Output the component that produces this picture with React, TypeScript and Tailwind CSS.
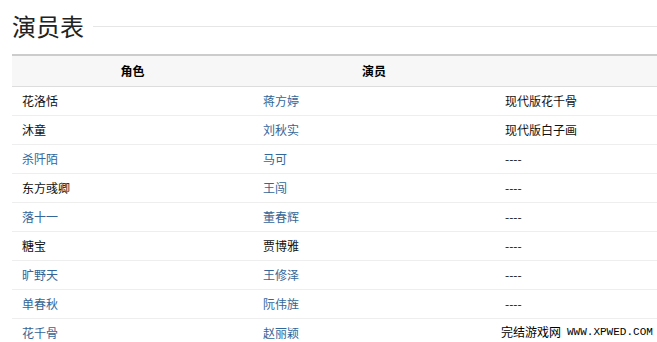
import React from "react";

type Row = { role: string; roleLink: boolean; actor: string; actorLink: boolean; note: string };

const rows: Row[] = [
  { role: "花洛恬", roleLink: false, actor: "蒋方婷", actorLink: true, note: "现代版花千骨" },
  { role: "沐童", roleLink: false, actor: "刘秋实", actorLink: true, note: "现代版白子画" },
  { role: "杀阡陌", roleLink: true, actor: "马可", actorLink: true, note: "----" },
  { role: "东方彧卿", roleLink: false, actor: "王闯", actorLink: true, note: "----" },
  { role: "落十一", roleLink: true, actor: "董春辉", actorLink: true, note: "----" },
  { role: "糖宝", roleLink: false, actor: "贾博雅", actorLink: false, note: "----" },
  { role: "旷野天", roleLink: true, actor: "王修泽", actorLink: true, note: "----" },
  { role: "单春秋", roleLink: true, actor: "阮伟旌", actorLink: true, note: "----" },
  { role: "花千骨", roleLink: true, actor: "赵丽颖", actorLink: true, note: "" },
];

const cellText = (t: string, link: boolean) => (
  <span className={link ? "text-[#336699]" : "text-[#111]"}>{t}</span>
);

export default function App() {
  return (
    <div
      className="relative w-[657px] h-[342px] overflow-hidden bg-white"
      style={{ fontFamily: '"Noto Sans CJK SC", "Noto Sans", sans-serif' }}
    >
      <div className="pt-[11px] pl-[12px] flex items-center">
        <h2 className="text-[24px] leading-[30px] text-[#222] font-normal tracking-[0px]">演员表</h2>
        <div className="ml-[9px] flex-1 h-px bg-[#e6e6e6]" />
      </div>
      <table className="mt-[13px] ml-[12px] w-[645px] border-collapse table-fixed text-[12px]">
        <colgroup>
          <col className="w-[241px]" />
          <col className="w-[242px]" />
          <col className="w-[162px]" />
        </colgroup>
        <thead>
          <tr className="h-[31px] bg-[#f7f7f7] border-t-2 border-t-[#cccccc] border-b border-b-[#dddddd]">
            <th className="font-bold text-center text-black p-0">角色</th>
            <th className="font-bold text-center text-black p-0">演员</th>
            <th className="p-0"></th>
          </tr>
        </thead>
        <tbody>
          {rows.map((r, i) => (
            <tr key={i} className="h-[29px] border-b border-b-[#eeeeee]">
              <td className="pl-[10px] p-0">{cellText(r.role, r.roleLink)}</td>
              <td className="pl-[10px] p-0">{cellText(r.actor, r.actorLink)}</td>
              <td className="pl-[10px] p-0 text-[#111]">{r.note}</td>
            </tr>
          ))}
        </tbody>
      </table>
      <div
        className="absolute left-[501px] top-[323px] flex items-center gap-[6px] leading-[18px] text-black whitespace-nowrap"
      >
        <span className="text-[12px]" style={{ fontFamily: '"Noto Sans CJK SC", sans-serif' }}>完结游戏网</span>
        <span className="text-[11px]" style={{ fontFamily: '"Liberation Mono", monospace' }}>WWW.XPWED.COM</span>
      </div>
    </div>
  );
}
